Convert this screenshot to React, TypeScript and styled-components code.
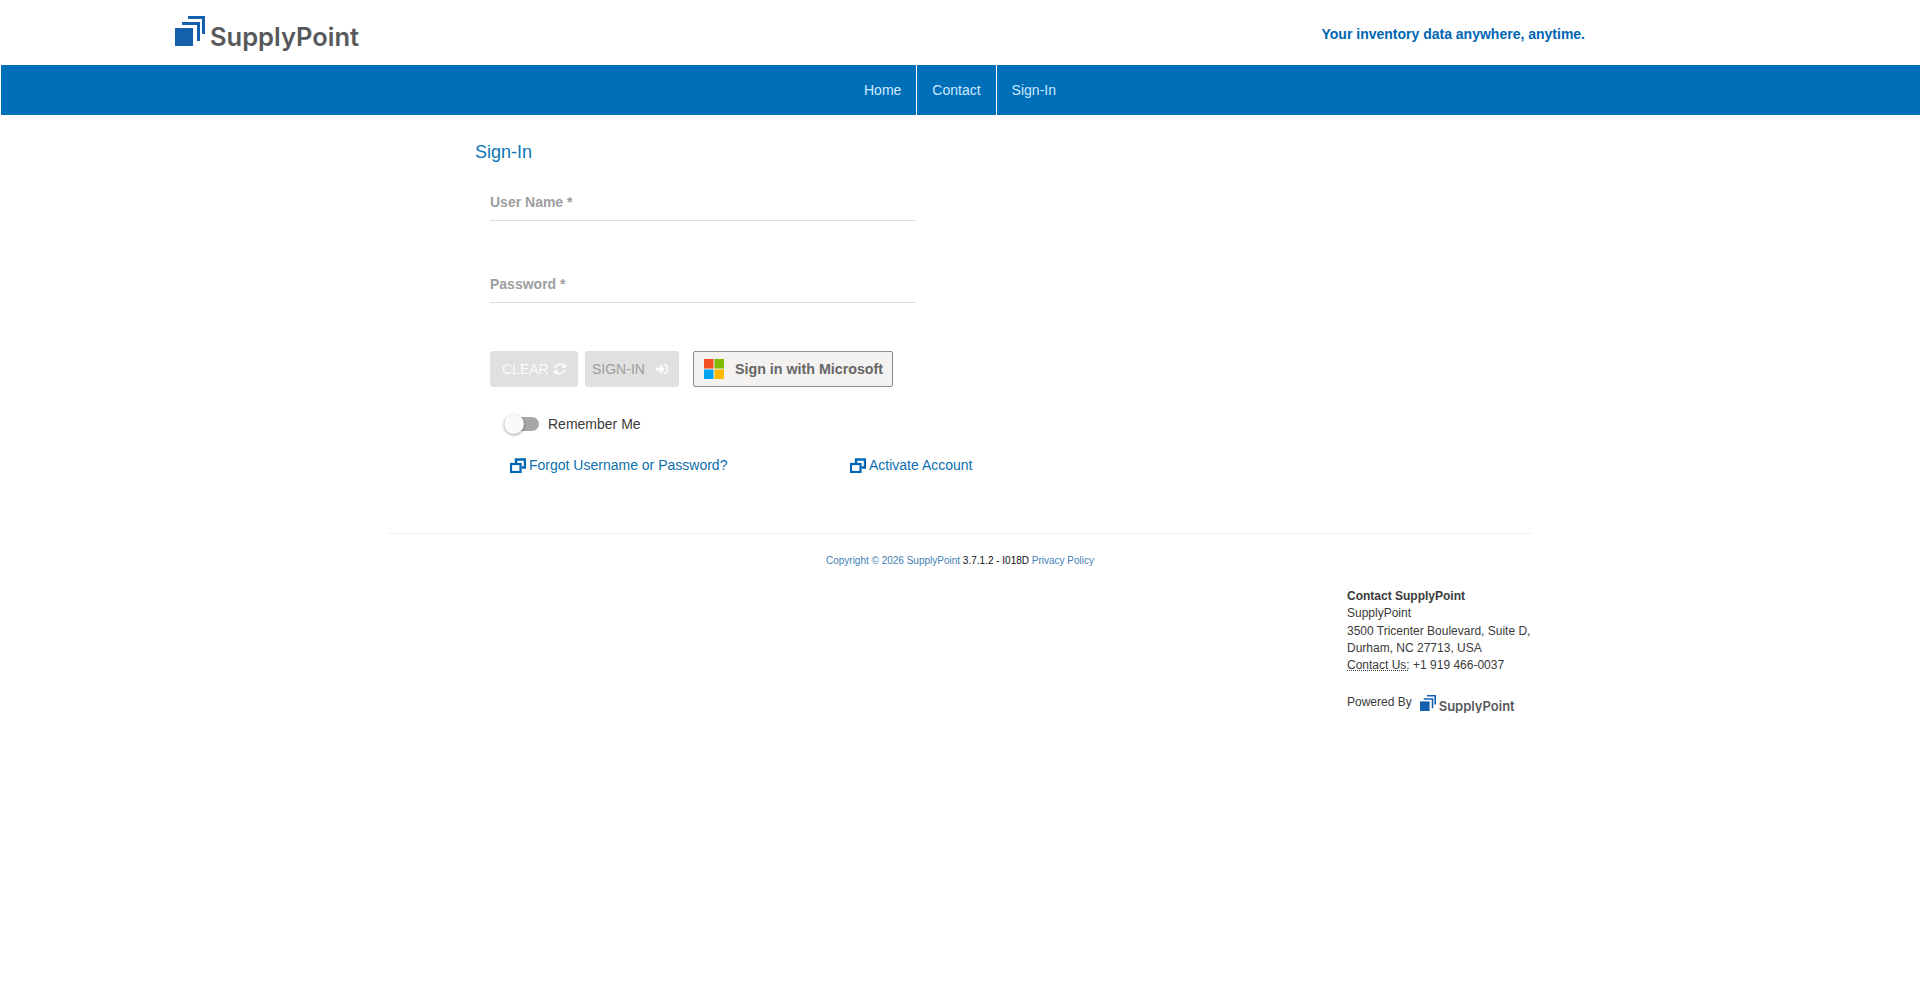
import styled, { createGlobalStyle } from "styled-components";
import { FaSignInAlt, FaSyncAlt } from "react-icons/fa";

const Global = createGlobalStyle`
  html, body {
    margin: 0;
    background: #fff;
    font-family: "Liberation Sans", Arial, sans-serif;
    font-size: 14px;
    color: #3a3a3a;
  }
`;

const Header = styled.header`
  height: 65px;
  padding: 0 335px 0 175px;
  display: flex;
  align-items: center;
  justify-content: space-between;
`;

const Tagline = styled.div`
  font-weight: 700;
  font-size: 14px;
  color: #0066b3;
  padding-top: 3px;
`;

const LogoWrap = styled.div<{ $small?: boolean }>`
  display: flex;
  align-items: baseline;
  gap: ${(p) => (p.$small ? 3 : 5)}px;
  margin-top: ${(p) => (p.$small ? 3 : 1)}px;
`;

const LogoText = styled.span<{ $small?: boolean }>`
  font-family: Inter, "Liberation Sans", sans-serif;
  font-weight: 600;
  font-size: ${(p) => (p.$small ? 13 : 25.5)}px;
  line-height: 1;
  color: #58595b;
`;

const Nav = styled.nav`
  height: 50px;
  margin-left: 1px;
  padding-left: 848px;
  background: #006fba;
  display: flex;
`;

const NavItem = styled.a<{ $last?: boolean }>`
  display: flex;
  align-items: center;
  padding: 0 15px;
  font-size: 14px;
  color: #cfe9fb;
  border-right: ${(p) => (p.$last ? "none" : "1px solid #fff")};
`;

const Main = styled.main`
  margin-left: 475px;
  padding-top: 27px;
`;

const Title = styled.h1`
  margin: 0;
  font-size: 18px;
  font-weight: 400;
  line-height: 20px;
  color: #0c75b5;
`;

const Form = styled.form`
  margin: 24px 0 0 15px;
`;

const Field = styled.div`
  width: 426px;
  height: 35px;
  margin-bottom: 47px;
  box-sizing: border-box;
  border-bottom: 1px solid #ddd;
  display: flex;
  align-items: center;
  font-size: 14px;
  font-weight: 700;
  color: #9e9e9e;
  padding-bottom: 3px;
`;

const Buttons = styled.div`
  display: flex;
  margin-top: 48px;
`;

const GreyButton = styled.button<{ $light?: boolean; $width: number; $pad: number; $gap: number }>`
  width: ${(p) => p.$width}px;
  height: 36px;
  border: none;
  border-radius: 3px;
  padding: 0 0 0 ${(p) => p.$pad}px;
  margin-right: 7px;
  background: #e0e0e0;
  font-family: inherit;
  font-size: 14px;
  color: ${(p) => (p.$light ? "#fafafa" : "#9d9d9d")};
  display: flex;
  align-items: center;
  gap: ${(p) => p.$gap}px;
  svg {
    color: #fafafa;
  }
`;

const MsButton = styled.button`
  width: 200px;
  height: 36px;
  margin-left: 7px;
  padding: 0 0 0 10px;
  border: 1px solid #8c8c8c;
  border-radius: 2px;
  background: #f3f2f1;
  font-family: inherit;
  font-size: 14.25px;
  font-weight: 700;
  color: #666;
  display: flex;
  align-items: center;
  gap: 11px;
`;

const MsGrid = styled.svg`
  width: 20px;
  height: 20px;
`;

const RememberRow = styled.div`
  display: flex;
  align-items: center;
  margin: 25px 0 0 14px;
  height: 24px;
  gap: 9px;
`;

const SwitchTrack = styled.span`
  position: relative;
  display: block;
  width: 35px;
  height: 14px;
  border-radius: 7px;
  background: #a6a6a6;
`;

const SwitchThumb = styled.span`
  position: absolute;
  left: 0;
  top: -3px;
  width: 20px;
  height: 20px;
  border-radius: 50%;
  background: #fafafa;
  box-shadow: 0 1px 3px rgba(0, 0, 0, 0.4);
`;

const LinkRow = styled.div`
  display: flex;
  margin: 19px 0 0 20px;
`;

const IconLink = styled.a<{ $width?: number }>`
  display: flex;
  align-items: center;
  gap: 3px;
  width: ${(p) => p.$width ?? 200}px;
  font-size: 14px;
  line-height: 20px;
  color: #0c6fae;
`;

const Footer = styled.footer`
  width: 1142px;
  margin: 58px 0 0 389px;
  border-top: 1px solid #eee;
`;

const Copyright = styled.div`
  margin-top: 21px;
  text-align: center;
  font-size: 10px;
  line-height: 12px;
  color: #111;
`;

const FootLink = styled.a`
  color: #3f7fb5;
`;

const Contact = styled.address`
  margin: 21px 0 0 958px;
  font-style: normal;
  font-size: 12px;
  line-height: 17.3px;
  white-space: nowrap;
`;

const ContactHead = styled.div`
  font-weight: 700;
`;

const Dotted = styled.abbr`
  text-decoration: underline dotted;
`;

const Powered = styled.div`
  display: flex;
  align-items: center;
  gap: 8px;
  margin-top: 18px;
`;

const Logo = ({ small }: { small?: boolean }) => {
  const s = small ? 16 : 30;
  return (
    <LogoWrap $small={small}>
      <svg width={s} height={s} viewBox="0 0 30 30">
        <rect x="0" y="12" width="18" height="18" fill="#1560ad" />
        <path d="M7 7.5H23.5V25" fill="none" stroke="#1560ad" strokeWidth="3" />
        <path d="M13 1.5H28.5V18" fill="none" stroke="#1560ad" strokeWidth="3" />
      </svg>
      <LogoText $small={small}>SupplyPoint</LogoText>
    </LogoWrap>
  );
};

const MsLogo = () => (
  <MsGrid viewBox="0 0 21 21">
    <rect x="0" y="0" width="10" height="10" fill="#f25022" />
    <rect x="11" y="0" width="10" height="10" fill="#7fba00" />
    <rect x="0" y="11" width="10" height="10" fill="#00a4ef" />
    <rect x="11" y="11" width="10" height="10" fill="#ffb900" />
  </MsGrid>
);

const WindowIcon = () => (
  <svg width="16" height="15" viewBox="0 0 16 15" fill="none" stroke="#0066b3" strokeWidth="2">
    <path d="M6 5V1.5H15V9.5H11.5" strokeWidth="2.4" />
    <rect x="1" y="6" width="9.5" height="8" strokeWidth="2.2" />
  </svg>
);

const App = () => {
  return (
    <>
      <Global />
      <Header>
        <Logo />
        <Tagline>Your inventory data anywhere, anytime.</Tagline>
      </Header>
      <Nav>
        <NavItem>Home</NavItem>
        <NavItem>Contact</NavItem>
        <NavItem $last>Sign-In</NavItem>
      </Nav>
      <Main>
        <Title>Sign-In</Title>
        <Form>
          <Field>User Name *</Field>
          <Field>Password *</Field>
          <Buttons>
            <GreyButton type="button" $light $width={88} $pad={12} $gap={5}>
              CLEAR <FaSyncAlt size={12} />
            </GreyButton>
            <GreyButton type="button" $width={94} $pad={7} $gap={11}>
              SIGN-IN <FaSignInAlt size={12} />
            </GreyButton>
            <MsButton type="button">
              <MsLogo />
              Sign in with Microsoft
            </MsButton>
          </Buttons>
          <RememberRow>
            <SwitchTrack>
              <SwitchThumb />
            </SwitchTrack>
            Remember Me
          </RememberRow>
          <LinkRow>
            <IconLink $width={340}>
              <WindowIcon /> Forgot Username or Password?
            </IconLink>
            <IconLink>
              <WindowIcon /> Activate Account
            </IconLink>
          </LinkRow>
        </Form>
      </Main>
      <Footer>
        <Copyright>
          <FootLink>Copyright © 2026 SupplyPoint</FootLink> 3.7.1.2 - I018D <FootLink>Privacy Policy</FootLink>
        </Copyright>
        <Contact>
          <ContactHead>Contact SupplyPoint</ContactHead>
          SupplyPoint
          <br />
          3500 Tricenter Boulevard, Suite D,
          <br />
          Durham, NC 27713, USA
          <br />
          <Dotted>Contact Us:</Dotted> +1 919 466-0037
          <Powered>
            Powered By <Logo small />
          </Powered>
        </Contact>
      </Footer>
    </>
  );
};

export default App;
